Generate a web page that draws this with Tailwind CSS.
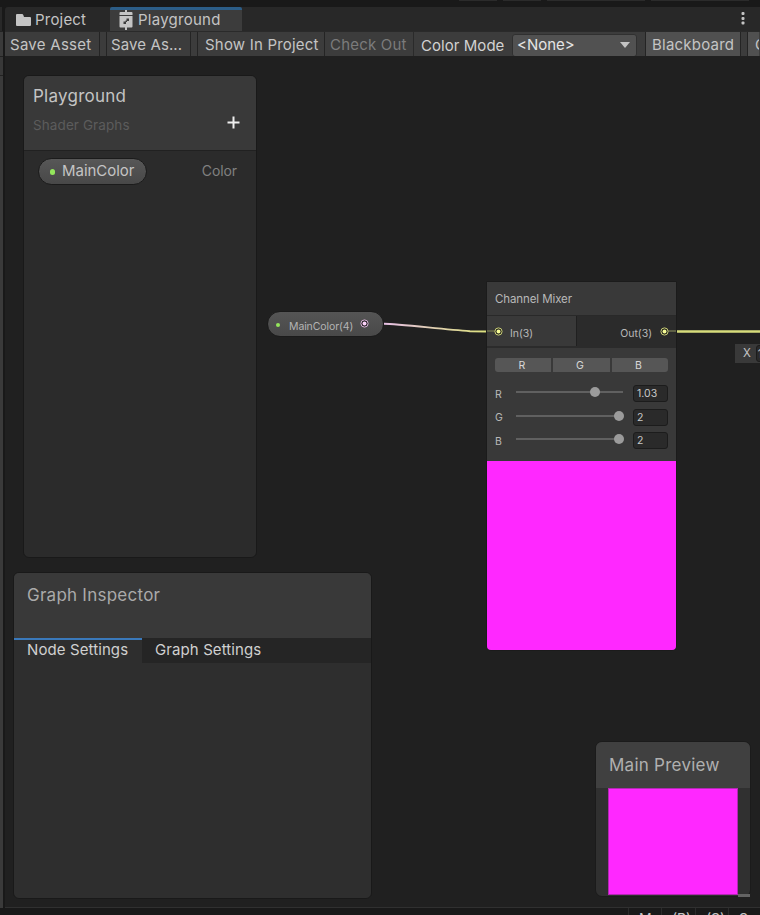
<!DOCTYPE html>
<html lang="en">
<head>
<meta charset="utf-8">
<title>Playground</title>
<script src="https://cdn.jsdelivr.net/npm/@tailwindcss/browser@4"></script>
</head>
<body class="bg-[#191919] overflow-hidden">
<div class="relative w-[760px] h-[915px] overflow-hidden flex flex-col bg-[#191919] text-[#c4c4c4] font-['Inter','Liberation_Sans',sans-serif] text-[15px] whitespace-nowrap">
  <!-- window edge above the tabs -->
  <div class="h-[7px] shrink-0 flex items-start pl-[459px] gap-[6px]">
    <i class="w-[38px] shrink-0 h-px bg-[#2b2b2b]"></i><i class="w-[38px] shrink-0 h-px bg-[#2b2b2b]"></i><i class="w-[98px] shrink-0 h-px bg-[#2b2b2b]"></i><i class="w-[98px] shrink-0 h-px bg-[#2b2b2b]"></i>
  </div>
  <div class="h-[901px] shrink-0 flex">
    <!-- neighbouring pane -->
    <div class="w-[3px] shrink-0 flex flex-col">
      <div class="h-[24px] w-[2px] bg-[#282828]"></div>
      <div class="h-[26px] bg-[#3a3a3a] border-t border-b border-[#222]"></div>
      <div class="h-[19px] bg-[#383838] border-b border-[#222]"></div>
      <div class="flex-1 bg-[#3a3a3a]"></div>
    </div>
    <div class="w-[2px] shrink-0 bg-[#191919]"></div>
    <main class="flex-1 flex flex-col min-w-0">
      <nav class="h-[24px] shrink-0 flex bg-[#282828] rounded-tl-[3px]">
        <div class="w-[105px] flex items-center pl-[11px] pt-[2px]">
          <svg class="w-[15px] h-[12px] shrink-0" viewBox="0 0 15 12"><path d="M0 1q0-1 1-1h5q1 0 1.300 1l.7 2h6q1 0 1 1v7q0 1-1 1H1q-1 0-1-1z" fill="#c4c4c4"/></svg>
          <span class="ml-[4px] tracking-[0.2px]">Project</span>
        </div>
        <div class="w-[132px] flex items-center pl-[9px] bg-[#3c3c3c] border-t-3 border-[#2c5d87] rounded-t-[2px]">
          <svg class="w-[14px] h-[20px] shrink-0 -mt-[1px]" viewBox="0 0 14 20"><path d="M6 0h2v2h4.500q1 0 1 1v2H.500V3q0-1 1-1H6zM.500 6h13v10.500q0 1-1 1H8V20H6v-2.500H1.500q-1 0-1-1z" fill="#c4c4c4"/><path d="M7.500 8.500h2.500v2.500h-2.500zM4.500 11.500h2.500v2.500H4.500zM6.500 10.500h1.500v1.500h-1.500z" fill="#3c3c3c"/></svg>
          <span class="ml-[5px] tracking-[0.25px]">Playground</span>
        </div>
        <div class="flex-1 flex justify-end pr-[15px] pt-[5px]">
          <svg class="w-[4px] h-[13px]" viewBox="0 0 4 13" fill="#c4c4c4"><rect x=".5" width="3" height="3" rx="1"/><rect x=".5" y="5" width="3" height="3" rx="1"/><rect x=".5" y="9.500" width="3" height="3" rx="1"/></svg>
        </div>
      </nav>
      <div class="h-[25px] shrink-0 flex bg-[#3c3c3c] border-t border-[#2a2a2a] leading-[26px] overflow-hidden [&>div]:shrink-0">
        <div class="w-[95px] pl-[5px] border-r border-[#242424] tracking-[0.27px]">Save Asset</div>
        <div class="w-[7px] border-r border-[#242424]"></div>
        <div class="w-[84px] pl-[4px] border-r border-[#242424] tracking-[0.1px]">Save As...</div>
        <div class="w-[7px] border-r border-[#242424]"></div>
        <div class="w-[127px] pl-[7px] border-r border-[#242424] tracking-[0.2px]">Show In Project</div>
        <div class="w-[89px] pl-[5px] border-r border-[#2a2a2a] text-[#7b7b7b] tracking-[0.2px]">Check Out</div>
        <div class="w-[98px] pl-[7px] pt-[1px] text-[#d2d2d2] tracking-[0.05px]">Color Mode</div>
        <div class="w-[125px] mt-[2px] h-[23px] flex items-center pl-[4px] bg-[#515151] border border-[#303030] rounded-[3px] text-[#e4e4e4] tracking-[0px] leading-[20px]"><span class="-mt-[2px]">&lt;None&gt;</span><svg class="ml-auto mr-[6px] -mt-[2px] w-[10px] h-[6px]" viewBox="0 0 10 6"><path d="M0 0h10L5 6z" fill="#c4c4c4"/></svg></div>
        <div class="w-[8px]"></div>
        <div class="w-[96px] pl-[6px] bg-[#505050] border-x border-[#242424] tracking-[0.22px]">Blackboard</div>
        <div class="w-[6px]"></div>
        <div class="w-[12px] pl-[7px] bg-[#505050] border-l border-[#242424] overflow-hidden">C</div>
      </div>
      <!-- graph canvas -->
      <section class="relative flex-1 bg-[#202020] border-b border-[#303030] overflow-hidden">
        <svg class="absolute left-0 top-0 w-[755px] h-[400px]" viewBox="5 56 755 400" fill="none">
          <defs><linearGradient id="wire" gradientUnits="userSpaceOnUse" x1="384" y1="0" x2="487" y2="0"><stop stop-color="#e6bfe4"/><stop offset="1" stop-color="#dce27c"/></linearGradient></defs>
          <path d="M384 323.800C398 323.800 440 329 470 331.200L487 331.500" stroke="url(#wire)" stroke-width="2"/>
          <path d="M676 331.500H760" stroke="#d7dc7b" stroke-width="2.300"/>
        </svg>

        <!-- blackboard -->
        <div class="absolute left-[18px] top-[19px] w-[234px] h-[483px] flex flex-col bg-[#2b2b2b] border border-[#191919] rounded-[6px] overflow-hidden">
          <div class="h-[75px] shrink-0 bg-[#393939] border-b border-[#212121] pl-[9px] pr-[16px]">
            <div class="h-[24px] mt-[8px] leading-[24px] text-[17px] tracking-[0.25px]">Playground</div>
            <div class="h-[34px] flex items-center justify-between text-[13.5px] text-[#5c5c5c] tracking-[0.1px]"><span>Shader Graphs</span>
              <svg class="w-[13px] h-[13px] -mt-[5px]" viewBox="0 0 13 13"><path d="M6.500 .5v12M.5 6.500h12" stroke="#eee" stroke-width="2"/></svg>
            </div>
          </div>
          <div class="flex items-center justify-between mt-[7px] pl-[14px] pr-[19px]">
            <div class="w-[109px] h-[27px] flex items-center pl-[11px] rounded-full border border-[#1b1b1b] bg-linear-to-b from-[#575757] to-[#484848]">
              <i class="w-[5px] h-[6px] rounded-full bg-[#94e65c] mt-[1px]"></i><span class="ml-[7px] -mt-[1px] tracking-[-0.03px]">MainColor</span>
            </div>
            <span class="text-[14px] text-[#808080] -mt-[2px] tracking-[-0.1px]">Color</span>
          </div>
        </div>

        <!-- property node -->
        <div class="absolute left-[262px] top-[255px] w-[117px] h-[26px] flex items-center pl-[8px] rounded-full border border-[#1b1b1b] bg-linear-to-b from-[#555] to-[#494949] text-[10.5px] text-[#b4b4b4]">
          <i class="w-[4px] h-[4px] rounded-full bg-[#94e65c] mt-[1px]"></i><span class="ml-[9px] mt-[5px] tracking-[-0.1px]">MainColor(4)</span>
          <svg class="absolute left-[92px] top-[7px] w-[9px] h-[9px]" viewBox="0 0 9 9"><circle cx="4.500" cy="4.500" r="3.600" fill="#201d20" stroke="#d9b3d7"/><circle cx="4.500" cy="4.500" r="2" fill="#fbd2f8"/></svg>
        </div>

        <!-- channel mixer -->
        <div class="absolute left-[481px] top-[225px] w-[191px] h-[370px] flex flex-col bg-[#393939] border border-[#1b1b1b] rounded-b-[5px] overflow-hidden text-[10.5px] text-[#b8b8b8]">
          <div class="h-[34px] shrink-0 border-b border-[#292929] pl-[8px] leading-[34px] text-[11.5px] tracking-[-0.1px]">Channel Mixer</div>
          <div class="h-[32px] shrink-0 flex border-b-2 border-[#2b2b2b]">
            <div class="relative w-[90px] border-r border-[#202020] flex items-center pl-[23px] pt-[5px]">
              <i class="absolute left-0 top-[14px] w-[8px] h-[2px] bg-[#5e6045]"></i>
              <svg class="absolute left-[7px] top-[11px] w-[9px] h-[9px]" viewBox="0 0 9 9"><circle cx="4.500" cy="4.500" r="3.600" fill="#20201a" stroke="#cdd179"/><circle cx="4.500" cy="4.500" r="2" fill="#f6fb96"/></svg>In(3)
            </div>
            <div class="relative flex-1 bg-[#2b2b2b] flex items-center justify-end pr-[24px] pt-[5px]">
              <i class="absolute right-0 top-[14px] w-[8px] h-[2px] bg-[#5e6045]"></i>
              <svg class="absolute right-[7px] top-[11px] w-[9px] h-[9px]" viewBox="0 0 9 9"><circle cx="4.500" cy="4.500" r="3.600" fill="#20201a" stroke="#cdd179"/><circle cx="4.500" cy="4.500" r="2" fill="#f6fb96"/></svg>Out(3)
            </div>
          </div>
          <div class="h-[113px] shrink-0 px-[8px] pt-[10px]">
            <div class="flex gap-[2px] h-[14px] text-center leading-[15px] text-[#d8d8d8]">
              <div class="w-[56px] pr-[2px] bg-[#565656] rounded-l-[3px]">R</div><div class="w-[57px] pr-[3px] bg-[#565656]">G</div><div class="w-[56px] pr-[3px] bg-[#565656] rounded-r-[3px]">B</div>
            </div>
            <div class="mt-[13px] flex flex-col gap-[6.5px]">
              <div class="h-[17px] flex items-center"><span class="w-[21px] pt-[2px]">R</span><div class="relative w-[107px] h-[2px] -mt-[3px] bg-[#606060]"><i class="absolute left-[74px] -top-[4px] w-[10px] h-[10px] rounded-full bg-[#9b9b9b]"></i></div><div class="ml-[10px] w-[35px] h-[17px] pl-[3px] leading-[16px] bg-[#2a2a2a] border border-[#1c1c1c] rounded-[3px] text-[#c8c8c8]">1.03</div></div>
              <div class="h-[17px] flex items-center"><span class="w-[21px] pt-[2px]">G</span><div class="relative w-[107px] h-[2px] -mt-[3px] bg-[#606060]"><i class="absolute left-[98px] -top-[4px] w-[10px] h-[10px] rounded-full bg-[#9b9b9b]"></i></div><div class="ml-[10px] w-[35px] h-[17px] pl-[3px] leading-[16px] bg-[#2a2a2a] border border-[#1c1c1c] rounded-[3px] text-[#c8c8c8]">2</div></div>
              <div class="h-[17px] flex items-center"><span class="w-[21px] pt-[2px]">B</span><div class="relative w-[107px] h-[2px] -mt-[3px] bg-[#606060]"><i class="absolute left-[98px] -top-[4px] w-[10px] h-[10px] rounded-full bg-[#9b9b9b]"></i></div><div class="ml-[10px] w-[35px] h-[17px] pl-[3px] leading-[16px] bg-[#2a2a2a] border border-[#1c1c1c] rounded-[3px] text-[#c8c8c8]">2</div></div>
            </div>
          </div>
          <div class="flex-1 bg-[#ff28ff]"></div>
        </div>

        <!-- inline vector input -->
        <div class="absolute left-[730px] top-[288px] w-[60px] h-[19px] flex items-center pl-[8px] bg-[#393939] text-[11.5px] text-[#c4c4c4]"><span class="w-[13px]">X</span><div class="w-[40px] h-[17px] bg-[#2a2a2a] border border-[#1c1c1c] rounded-[3px] pl-[1px] leading-[16px]">1</div></div>

        <!-- graph inspector -->
        <div class="absolute left-[8px] top-[516px] w-[359px] h-[327px] flex flex-col bg-[#2e2e2e] border border-[#191919] rounded-[6px] overflow-hidden">
          <div class="h-[65px] shrink-0 bg-[#393939] pl-[13px] pt-[10px] leading-[24px] text-[17px] text-[#aaa] tracking-[0.25px]">Graph Inspector</div>
          <div class="h-[25px] shrink-0 flex bg-[#252525] text-[#d0d0d0] leading-[20px] tracking-[0.1px]">
            <div class="w-[128px] pl-[13px] bg-[#2e2e2e] border-t-2 border-[#3a79bb]">Node Settings</div>
            <div class="pl-[13px] pt-[2px]">Graph Settings</div>
          </div>
        </div>

        <!-- main preview -->
        <div class="absolute left-[590px] top-[685px] w-[156px] h-[156px] flex flex-col bg-[#303030] border border-[#1b1b1b] rounded-[7px] overflow-hidden">
          <div class="h-[46px] shrink-0 bg-[#404040] pl-[13px] pt-[11px] leading-[24px] text-[17px] text-[#b0b0b0] tracking-[0.25px]">Main Preview</div>
          <div class="ml-[12px] w-[130px] h-[107px] bg-[#ff28ff] border border-[#b427b4]"></div>
        </div>
        <i class="absolute left-[733px] top-[838px] w-[12px] h-[3px] bg-[#636363]"></i>
      </section>
    </main>
  </div>
  <!-- top of the pane below -->
  <div class="h-[7px] shrink-0 flex items-start pl-[628px] overflow-hidden leading-[18px] text-[14px] [&>div]:shrink-0">
    <div class="w-[34px] pl-[10px] pt-[2px] border-x border-[#2b2b2b]">M</div><div class="w-[34px] pl-[10px] pt-[2px] border-r border-[#2b2b2b]">(P)</div><div class="w-[33px] pl-[10px] pt-[2px] border-r border-[#2b2b2b]">(S)</div><div class="pl-[10px] pt-[2px]">S</div>
  </div>
</div>
</body>
</html>
